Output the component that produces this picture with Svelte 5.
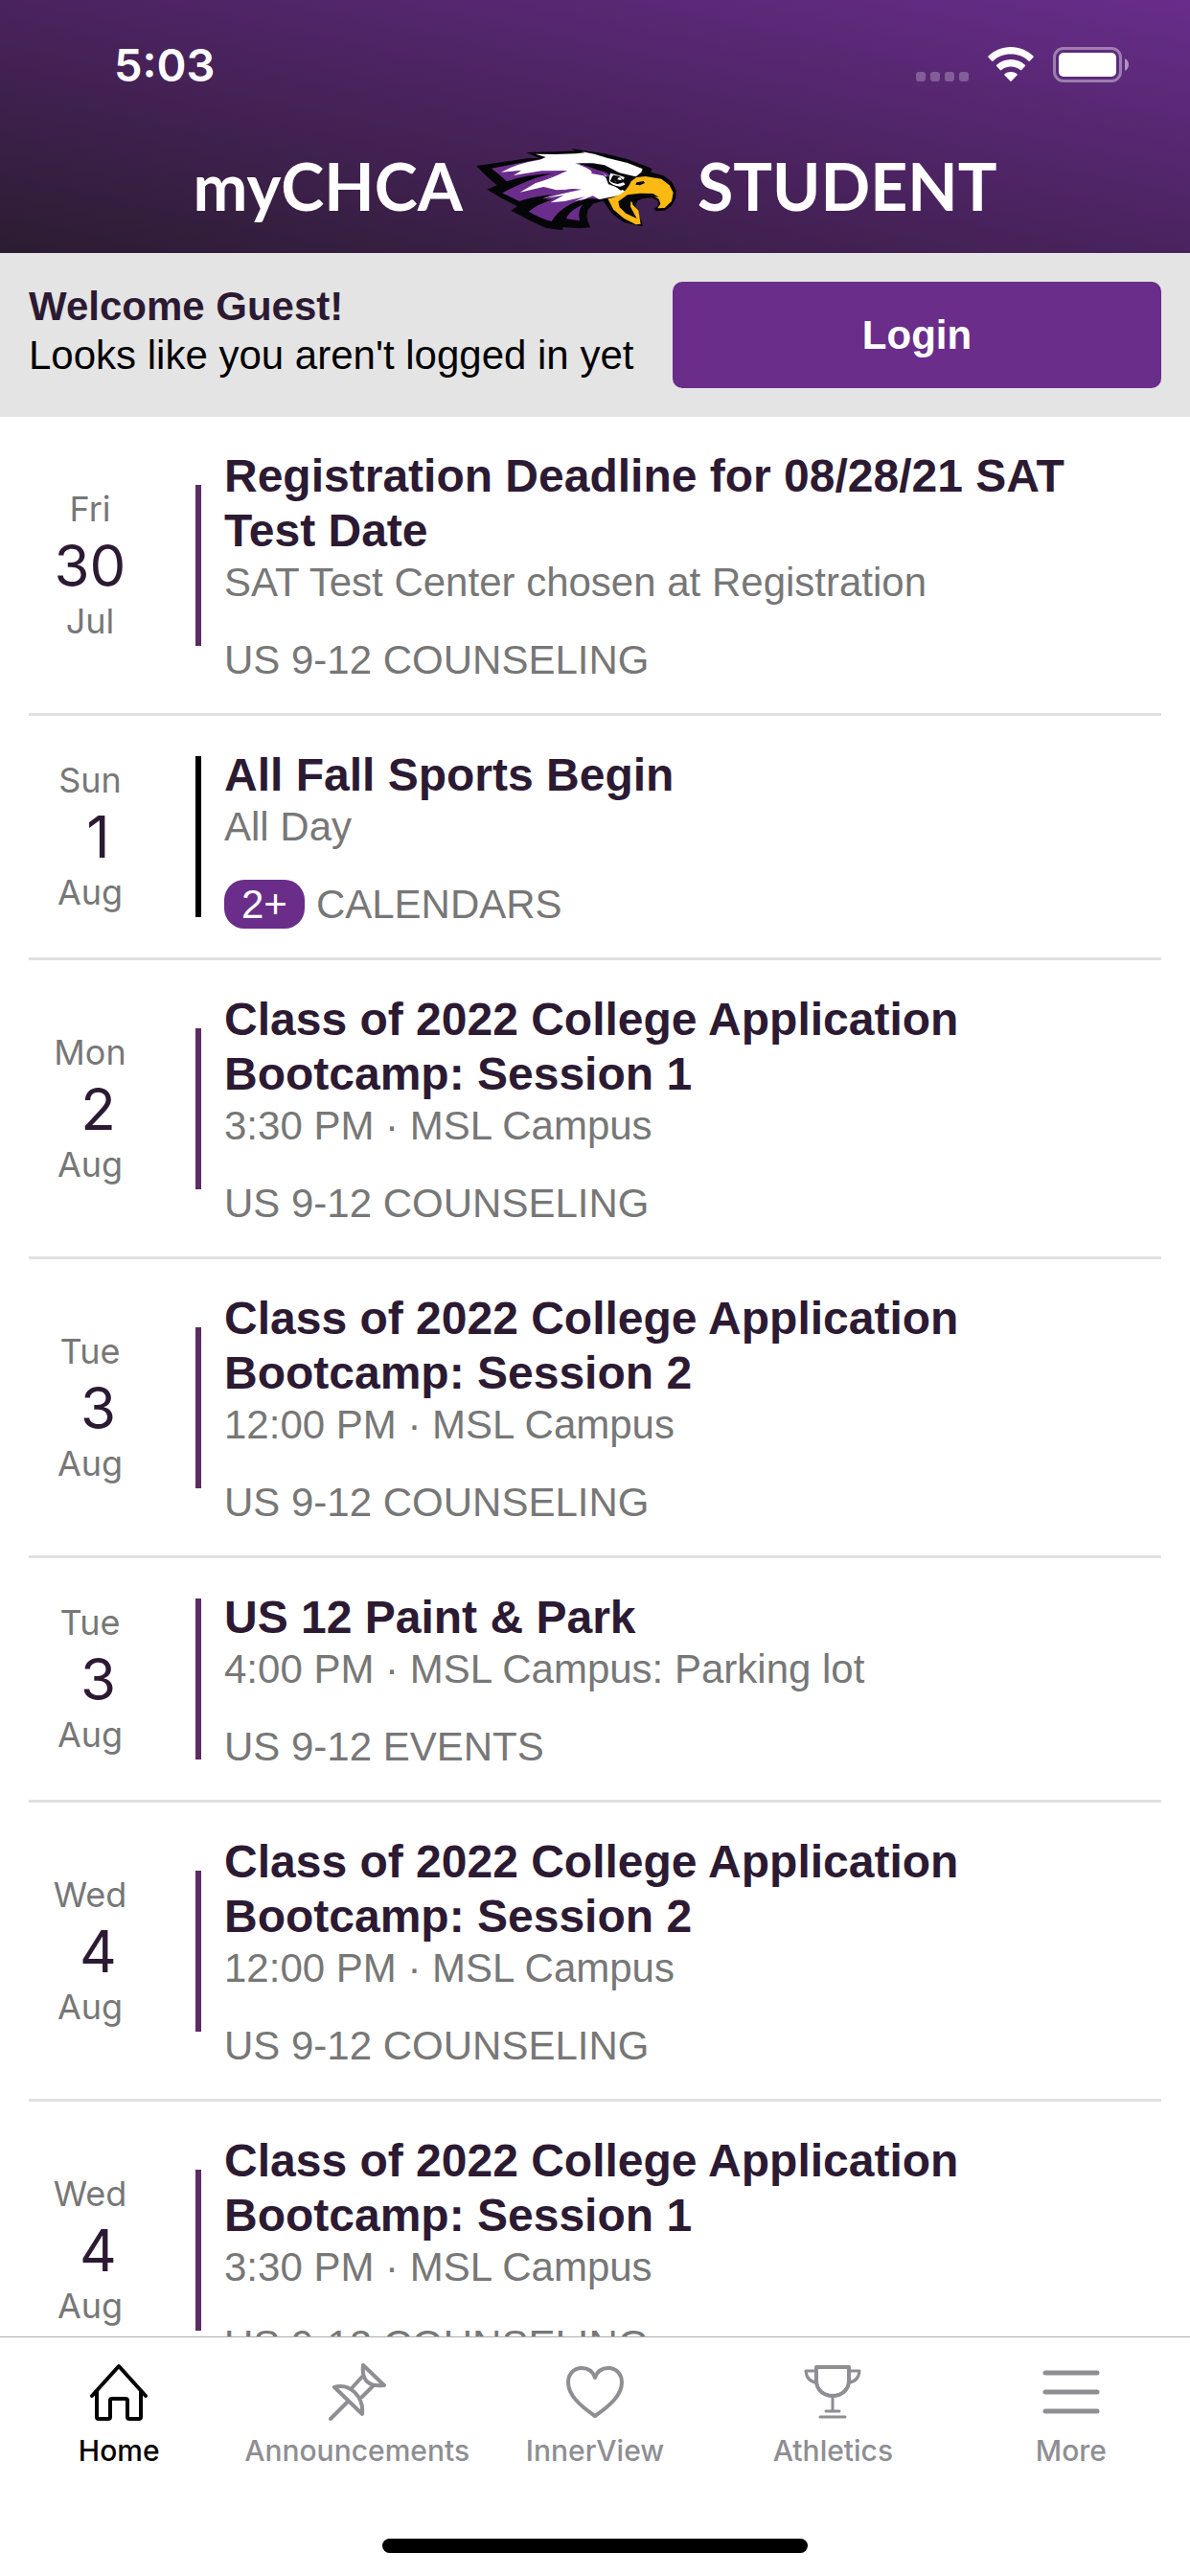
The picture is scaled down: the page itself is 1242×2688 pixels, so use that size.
<script lang="ts">
	type CalendarEvent = {
		weekday: string;
		day: number;
		month: string;
		title: string;
		detail: string;
		calendar: string;
		badge?: string;
	};

	const events: CalendarEvent[] = [
		{ weekday: 'Fri', day: 30, month: 'Jul', title: 'Registration Deadline for 08/28/21 SAT Test Date', detail: 'SAT Test Center chosen at Registration', calendar: 'US 9-12 COUNSELING' },
		{ weekday: 'Sun', day: 1, month: 'Aug', title: 'All Fall Sports Begin', detail: 'All Day', calendar: 'CALENDARS', badge: '2+' },
		{ weekday: 'Mon', day: 2, month: 'Aug', title: 'Class of 2022 College Application Bootcamp: Session 1', detail: '3:30 PM · MSL Campus', calendar: 'US 9-12 COUNSELING' },
		{ weekday: 'Tue', day: 3, month: 'Aug', title: 'Class of 2022 College Application Bootcamp: Session 2', detail: '12:00 PM · MSL Campus', calendar: 'US 9-12 COUNSELING' },
		{ weekday: 'Tue', day: 3, month: 'Aug', title: 'US 12 Paint & Park', detail: '4:00 PM · MSL Campus: Parking lot', calendar: 'US 9-12 EVENTS' },
		{ weekday: 'Wed', day: 4, month: 'Aug', title: 'Class of 2022 College Application Bootcamp: Session 2', detail: '12:00 PM · MSL Campus', calendar: 'US 9-12 COUNSELING' },
		{ weekday: 'Wed', day: 4, month: 'Aug', title: 'Class of 2022 College Application Bootcamp: Session 1', detail: '3:30 PM · MSL Campus', calendar: 'US 9-12 COUNSELING' }
	];

	const tabs = ['Home', 'Announcements', 'InnerView', 'Athletics', 'More'];
	let activeTab = $state('Home');
</script>

<div class="app">
	<header class="header">
		<div class="status">
			<span class="clock">5:03</span>
			<div class="status-icons">
				<svg width="55" height="37" viewBox="0 0 55 37" fill="#fff" fill-opacity="0.25" aria-hidden="true">
					<rect x="0" y="26" width="10" height="10" rx="3" />
					<rect x="15" y="26" width="10" height="10" rx="3" />
					<rect x="30" y="26" width="10" height="10" rx="3" />
					<rect x="45" y="26" width="10" height="10" rx="3" />
				</svg>
				<svg width="48" height="37" viewBox="0 0 48 37" fill="#fff" aria-hidden="true">
					<path d="M24 0C33 0 41.500 3.500 47.500 9.600Q48 10.200 47.500 10.800L43.800 14.800Q43.200 15.300 42.600 14.700C37.600 10.100 31.200 7.600 24 7.600S10.400 10.100 5.400 14.700Q4.800 15.300 4.200 14.800L.5 10.800Q0 10.200.5 9.600C6.500 3.500 15 0 24 0Z" />
					<path d="M24 13C29.600 13 34.800 15.100 38.800 18.700Q39.500 19.400 38.900 20L35.200 24Q34.500 24.600 33.800 24C31.200 21.700 27.800 20.500 24 20.500S16.800 21.700 14.200 24Q13.500 24.600 12.800 24L9.100 20Q8.500 19.400 9.200 18.700C13.200 15.100 18.400 13 24 13Z" />
					<path d="M24 26C26.500 26 28.700 26.800 30.500 28.200Q31 28.800 30.500 29.400L24.700 35.600Q24 36.200 23.300 35.600L17.500 29.400Q17 28.800 17.500 28.200C19.300 26.800 21.500 26 24 26Z" />
				</svg>
				<svg width="80" height="37" viewBox="0 0 80 37" aria-hidden="true">
					<rect x="1.500" y="1.500" width="69" height="34" rx="9.500" fill="none" stroke="#fff" stroke-opacity="0.4" stroke-width="3" />
					<rect x="6" y="6" width="60" height="25" rx="5" fill="#fff" />
					<path d="M75 12C80.300 14.500 80.300 22.500 75 25Z" fill="#fff" fill-opacity="0.5" />
				</svg>
			</div>
		</div>
		<h1 class="brand">
			<span>myCHCA</span>
			<svg class="eagle" viewBox="0 0 630 258" aria-hidden="true">
				<path fill="#050608" d="M0 54L160 31L199 29L191 28L157 12L243 10L310 7L297 0L370 11L410 17L475 34L550 62L547 74L586 85L612 104L626 132L624 157L611 180L590 194L562 196L557 187L567 183L571 173L567 163L550 154L521 157L504 164L498 181L503 204L519 229L521 244L462 231L425 203L398 164L368 172L351 190L346 211L350 229L358 247L321 250L271 246V256L217 248L169 226L138 209L109 194L129 181L82 157L34 128L65 115L30 84Z" />
				<path fill="#6a2d8b" d="M48 62L200 33L330 55L432 80L411 150L395 158Q362 158 338 172Q316 190 324 226L281 220Q292 192 329 160Q262 184 237 228Q204 221 164 197Q190 175 240 160L204 161Q160 162 135 165L81 139Q120 118 203 85Q150 90 96 103Q76 84 48 62Z" />
				<path fill="#050608" d="M96 103Q150 82 240 78Q180 92 133 111L81 139L70 128ZM135 165Q190 145 262 143Q205 160 164 197L150 190ZM237 228Q262 180 350 157L395 158Q300 176 281 220L271 240Z" />
				<path fill="#fff" d="M78 74Q126 46 199 35L218 27L186 17L249 18L312 16L340 13L328 9L370 17L409 29L474 45L521 64L517 74L500 88L477 87L435 73L393 52L318 47L367 64L399 78L408 86L418 104L421 114L452 125L472 138L458 145L420 152L385 159L365 148L339 158L308 165L342 151L299 160L277 165L233 169L274 146L209 157L283 128L252 130L211 120L137 137L186 108L237 88L286 69L204 70L117 84L142 68Z" />
				<path fill="#6a2d8b" d="M308 46Q374 60 399 78L411 96L398 85L360 78Q373 69 308 46ZM286 69Q250 73 237 88Q200 100 186 108Q235 95 283 70ZM283 128Q245 138 209 157Q262 142 330 128Q300 124 283 128Z" />
				<path fill="#050608" d="M310 46L365 46L402 52L448 76L499 88L507 93L479 98L465 111L466 126L453 131L432 116L414 112L405 87L424 90L408 75L369 54Z" />
				<path fill="#fff" d="M420 77L448 84L465 90L460 98L448 86L429 83L425 90L419 102Q431 111 443 111L462 106L466 113L450 119Q426 117 416 103L417 90Z" />
				<path fill="#fff" d="M436 91L452 91L457 102L439 105Q430 101 436 91Z" />
				<path fill="#050608" d="M431 86L447 88L442 97Q456 102 461 96Q458 108 443 107Q428 99 431 86Z" />
				<path fill="#fdb913" d="M485 103L502 90L530 87L580 95L605 115L617 138L612 165L590 186L568 187L577 173L572 158L551 147L518 149L485 159L491 177L508 194L515 236L500 238L463 219L430 191L412 157Q466 149 485 103Z" />
				<path fill="#050608" d="M502 106L524 102L528 108L513 115L499 113Z" />
				<path fill="#050608" d="M445 166L474 145L513 140L553 141L572 152L550 151L521 154L500 162L493 172L484 165L483 182L503 219L469 203L449 184Z" />
			</svg>
			<span>STUDENT</span>
		</h1>
	</header>

	<section class="welcome">
		<p><strong>Welcome Guest!</strong><br />Looks like you aren't logged in yet</p>
		<button class="login">Login</button>
	</section>

	<main class="events">
		{#each events as event}
			<article class="event">
				<div class="date">
					<span>{event.weekday}</span>
					<!-- single digits are padded with a space -->
					<span class="day">{String(event.day).padStart(2)}</span>
					<span>{event.month}</span>
				</div>
				<div class="bar" class:multiple={event.badge}></div>
				<div class="info">
					<h2>{event.title}</h2>
					<p>{event.detail}</p>
					<p class="calendar">
						{#if event.badge}<span class="badge">{event.badge}</span>{/if}
						{event.calendar}
					</p>
				</div>
			</article>
		{/each}
	</main>

	<footer>
		<nav class="tabs">
			{#each tabs as tab}
				<button class="tab" class:active={activeTab === tab} onclick={() => (activeTab = tab)}>
					<svg width="60" height="60" viewBox="0 0 60 60" fill="none" stroke="currentColor" stroke-width="4" stroke-linecap="round" stroke-linejoin="round" aria-hidden="true">
						{#if tab === 'Home'}
							<path d="M2 34L30 3L58 34M7 29V56Q7 58 9 58H19Q21 58 21 56V39Q21 37 23 37H37Q39 37 39 39V56Q39 58 41 58H51Q53 58 53 56V29" />
						{:else if tab === 'Announcements'}
							<path d="M36 2L58 23C42 25 34 18 36 2ZM35 14L25 25M46 24L35 35M6 25C22 20 37 35 35 53ZM20 40L2 58" />
						{:else if tab === 'InnerView'}
							<path d="M30 55C14 44 2 33 2 20C2 11 8 5 16 5C23 5 28 9 30 15C32 9 37 5 44 5C52 5 58 11 58 20C58 33 46 44 30 55Z" />
						{:else if tab === 'Athletics'}
							<path stroke-width="3" d="M13 4H47V18C47 28 39 34 30 34S13 28 13 18ZM13 8H2Q3 19 13 20M47 8H58Q57 19 47 20M30 34V50M23 50H37M17 56H43" />
							<path stroke-width="4" d="M13 4H47V18C47 28 39 34 30 34S13 28 13 18Z" />
						{:else}
							<path stroke-width="5" d="M3 10H57M3 30H57M3 50H57" />
						{/if}
					</svg>
					{tab}
				</button>
			{/each}
		</nav>
		<div class="home-indicator"></div>
	</footer>
</div>

<style>
	:global(body) {
		margin: 0;
	}

	.app {
		display: flex;
		flex-direction: column;
		height: 100vh;
		background: #fff;
		font-family: "Liberation Sans", Arial, sans-serif;
		font-size: 42px;
		line-height: 51px;
		color: #777;
	}

	h1, h2, p {
		margin: 0;
	}

	button {
		border: none;
		font-family: inherit;
		cursor: pointer;
	}

	.header {
		flex: none;
		background: linear-gradient(to top right, #2b1c31, #4a235e 50%, #682d8b);
		color: #fff;
	}

	.status {
		display: flex;
		justify-content: space-between;
		align-items: center;
		height: 135px;
		padding: 0 63px 0 119px;
	}

	.clock {
		font-family: Inter, sans-serif;
		font-size: 47px;
		font-weight: 600;
	}

	.status-icons {
		display: flex;
		gap: 20px;
	}

	.brand {
		display: flex;
		justify-content: center;
		align-items: center;
		height: 126px;
		padding-bottom: 3px;
		font-family: Lato, sans-serif;
		font-size: 68px;
		font-weight: 700;
		line-height: 84px;
	}

	.brand span {
		padding-bottom: 9px;
	}

	.eagle {
		width: 210px;
		height: 86px;
		margin: 0 21px 0 14px;
	}

	.welcome {
		flex: none;
		display: flex;
		justify-content: space-between;
		gap: 30px;
		padding: 30px;
		background: #e4e4e4;
		color: #000;
	}

	.welcome strong {
		color: #2c1a33;
	}

	.login {
		flex: 0 1 510px;
		height: 111px;
		border-radius: 10px;
		background: #6a2d8a;
		color: #fff;
		font-size: 42px;
		font-weight: 700;
	}

	.events {
		flex: 1;
		min-height: 0;
		overflow-y: auto;
		scrollbar-width: none;
		padding: 0 30px;
	}

	.event {
		display: flex;
		align-items: center;
		border-bottom: 3px solid #e0e0e0;
	}

	.date {
		display: flex;
		flex-direction: column;
		width: 128px;
		text-align: center;
		font-family: Inter, sans-serif;
		font-size: 36px;
	}

	.day {
		font-size: 60px;
		line-height: 66px;
		white-space: pre;
		color: #2c1a33;
	}

	.bar {
		width: 6px;
		height: 168px;
		margin: 0 24px 0 46px;
		background: #5a2d62;
	}

	.bar.multiple {
		background: #000;
	}

	.info {
		flex: 1;
		padding: 33px 0 30px;
	}

	h2 {
		font-size: 48px;
		line-height: 57px;
		color: #2c1a33;
	}

	.calendar {
		display: flex;
		gap: 12px;
		margin-top: 30px;
	}

	.badge {
		padding: 0 18px;
		border-radius: 21px;
		background: #6a2d8a;
		color: #fff;
	}

	footer {
		flex: none;
		border-top: 1px solid #adadad;
		background: #fff;
	}

	.tabs {
		display: flex;
		padding-top: 27px;
	}

	.tab {
		flex: 1 1 0;
		min-width: 0;
		display: flex;
		flex-direction: column;
		align-items: center;
		gap: 13px;
		padding: 0;
		background: none;
		color: #8e8e93;
		font-family: Inter, sans-serif;
		font-size: 30px;
		font-weight: 500;
		line-height: 36px;
	}

	.tab.active {
		color: #000;
	}

	.home-indicator {
		width: 444px;
		max-width: 60%;
		height: 15px;
		margin: 74px auto 24px;
		border-radius: 8px;
		background: #000;
	}
</style>
